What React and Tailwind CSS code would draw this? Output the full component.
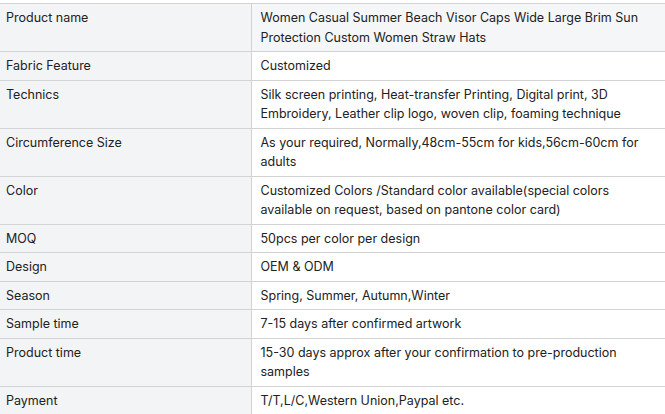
import React from "react";

const rows = [
  ["Product name", "Women Casual Summer Beach Visor Caps Wide Large Brim Sun Protection Custom Women Straw Hats", true],
  ["Fabric Feature", "Customized"],
  ["Technics", "Silk screen printing, Heat-transfer Printing, Digital print, 3D Embroidery, Leather clip logo, woven clip, foaming technique"],
  ["Circumference Size", "As your required, Normally,48cm-55cm for kids,56cm-60cm for adults"],
  ["Color", "Customized Colors /Standard color available(special colors available on request, based on pantone color card)"],
  ["MOQ", "50pcs per color per design"],
  ["Design", "OEM & ODM"],
  ["Season", "Spring, Summer, Autumn,Winter"],
  ["Sample time", "7-15 days after confirmed artwork"],
  ["Product time", "15-30 days approx after your confirmation to pre-production samples"],
  ["Payment", "T/T,L/C,Western Union,Paypal etc."],
];

export default function App() {
  return (
    <div className="w-[665px] h-[414px] overflow-hidden bg-white pt-[3px]" style={{ fontFamily: "Inter, 'Liberation Sans', sans-serif" }}>
      <table className="w-[665px] border-collapse table-fixed text-[12.5px] leading-[19.5px] text-[#222]">
        <colgroup>
          <col className="w-[251px]" />
          <col />
        </colgroup>
        <tbody>
          {rows.map(([k, v, hl], i) => (
            <tr key={i} className="border-t border-b border-[#d3d3d3]">
              <td className="bg-[#f3f4f6] border-r border-[#d3d3d3] pl-[6px] pr-2 py-1 align-top">{k}</td>
              <td className={`${hl ? "bg-[#f5f6f8]" : "bg-white"} pl-[9px] pr-[9px] py-1 align-top`}>{v}</td>
            </tr>
          ))}
        </tbody>
      </table>
    </div>
  );
}
